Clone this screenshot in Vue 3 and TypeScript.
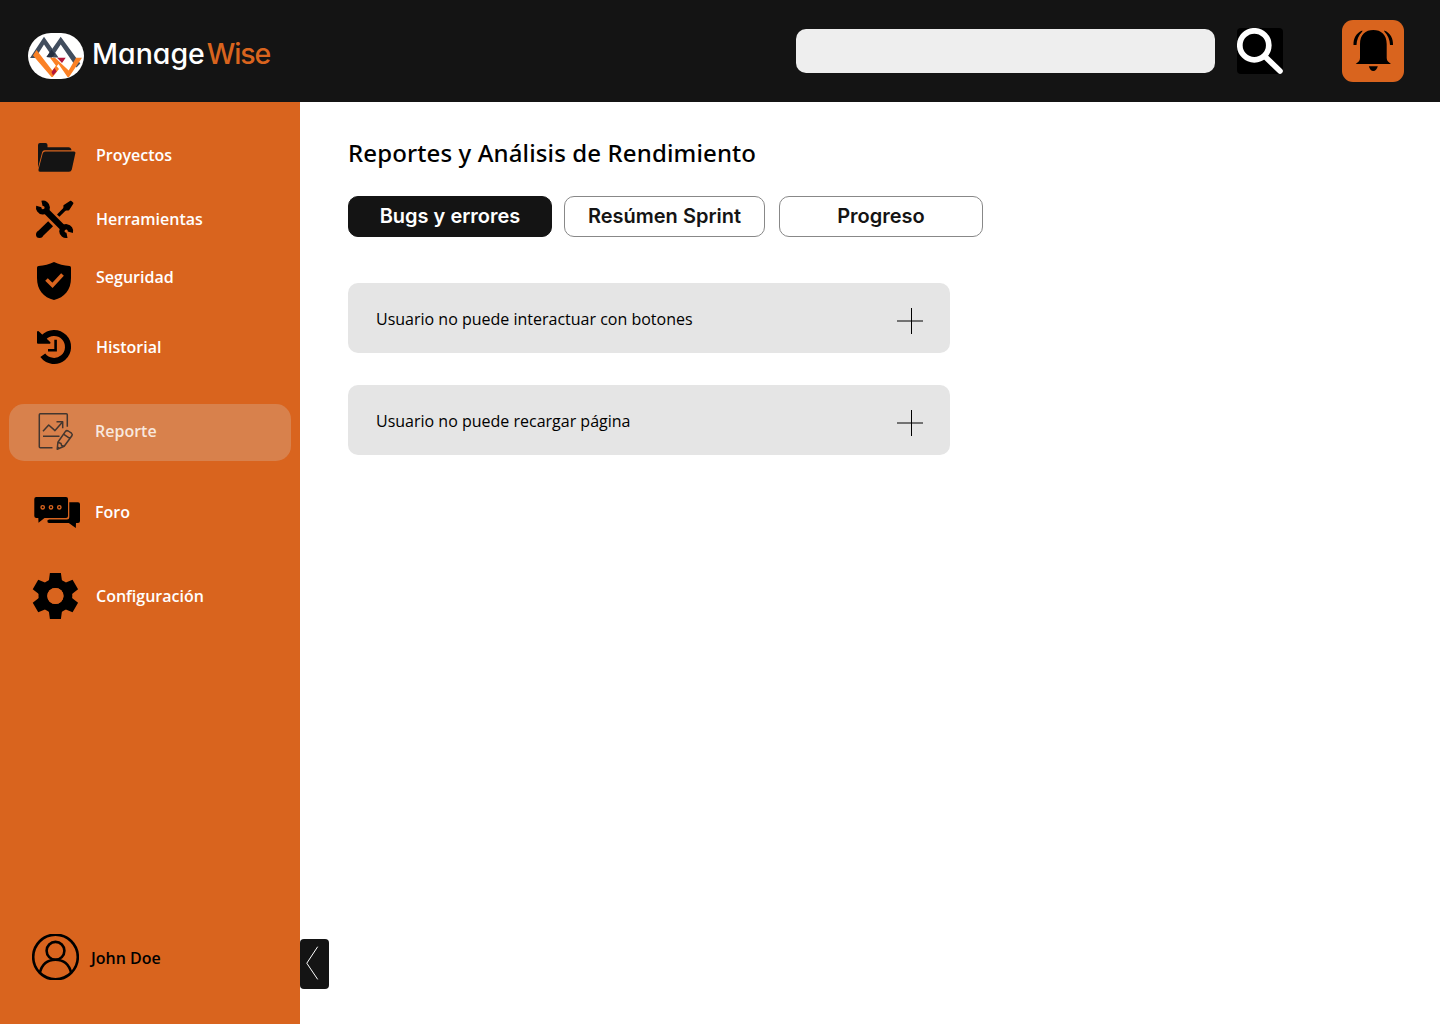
<script setup lang="ts">
import { ref } from 'vue'

interface NavItem {
  id: string
  label: string
  viewBox: string
}

const navItems: NavItem[] = [
  { id: 'proyectos', label: 'Proyectos', viewBox: '32 131 48 48' },
  { id: 'herramientas', label: 'Herramientas', viewBox: '32 195 48 48' },
  { id: 'seguridad', label: 'Seguridad', viewBox: '32 253 48 48' },
  { id: 'historial', label: 'Historial', viewBox: '32 323 48 48' },
  { id: 'reporte', label: 'Reporte', viewBox: '32 407 48 48' },
  { id: 'foro', label: 'Foro', viewBox: '32 488 48 48' },
  { id: 'configuracion', label: 'Configuración', viewBox: '32 572 48 48' },
]

const tabs = ['Bugs y errores', 'Resúmen Sprint', 'Progreso']
const activeTab = ref(0)
const query = ref('')
const issues = ['Usuario no puede interactuar con botones', 'Usuario no puede recargar página']
</script>

<template>
  <div class="app">
    <header class="topbar">
      <div class="brand">
        <svg class="logo" viewBox="28 33 56 46" width="56" height="46">
          <rect x="28" y="33" width="56" height="46" rx="23" fill="#fff" />
          <path d="M30 58 L44 36.700 L58.500 57.500 H53 L44 44.500 L35.500 58 Z" fill="#414d5e" />
          <path d="M46.500 57 L60.700 36.700 L80.300 63.500 L76.500 67.500 L60.700 44.500 L52 57.500 Z" fill="#414d5e" />
          <path d="M46.500 57 L51.500 49.500 L55 54 L52 57.500 Z" fill="#252f40" />
          <path d="M33 55.500 L36.500 50 L52.300 70.500 L56 65.500 L59 69 L52.700 77 H51.500 Z" fill="#fb8125" />
          <path d="M50 57.700 H55 L68.700 70.500 L76 57.700 H82 L69 77 H67.500 L58.500 64 L56.500 66.500 Z" fill="#fb8125" />
          <path d="M57 57.700 H65.700 L62 63 Z M54.500 68 L56.700 71.500 L53 75.500 L51.500 72 Z" fill="#b5173a" />
        </svg>
        <div class="wordmark"><span class="manage">Manage</span><span class="accent">Wise</span></div>
      </div>
      <div class="actions">
        <input v-model="query" class="search" type="text" aria-label="Buscar" />
        <button class="search-btn" aria-label="Buscar">
          <svg viewBox="1237 28 46 46" width="46" height="46">
            <path d="M1266 57.500 L1280 71" stroke="#fff" stroke-width="5.6" stroke-linecap="round" />
            <circle cx="1254.300" cy="45.300" r="14.500" fill="none" stroke="#fff" stroke-width="5.700" />
          </svg>
        </button>
        <button class="bell" aria-label="Notificaciones">
          <svg viewBox="1342 20 62 62" width="62" height="62">
            <path d="M1360 44 C1360 34.500 1365.500 30 1373.300 30 C1381 30 1386.700 34.500 1386.700 44 V58 Q1386.700 60 1388 61.500 L1391 64 H1355.700 L1358.700 61.500 Q1360 60 1360 58 Z" />
            <path d="M1368.900 66.200 H1377.800 Q1376.500 71 1373.300 71 Q1370 71 1368.900 66.200 Z" />
            <path d="M1362.300 30.500 C1356 33 1353.300 38.500 1353.500 45 H1356.500 C1356.700 39.500 1358.500 35.500 1362.300 31.500 Z M1384.300 30.500 C1390.600 33 1393.200 38.500 1393 45 H1390 C1389.800 39.500 1388 35.500 1384.300 31.500 Z" />
          </svg>
        </button>
      </div>
    </header>

    <div class="body">
      <aside class="sidebar">
        <nav>
          <a v-for="item in navItems" :key="item.id" :class="['nav-item', item.id]">
            <svg class="nav-icon" :viewBox="item.viewBox" width="48" height="48">
              <g v-if="item.id === 'proyectos'" fill="#141414">
                <path d="M38 168 V145 Q38 143 40 143 H45.500 Q47.500 143 47.500 145 V147.300 H68.500 Q71 147.300 71.500 150.300 H44.500 Q42.800 150.300 42.200 152 Z" />
                <path d="M45.500 151.400 H74 Q75.800 151.400 75.400 153 L71.800 169.500 Q71.200 171.800 69 171.800 H40 Q38 171.800 38.500 169.500 L42.700 153.500 Q43.200 151.400 45.500 151.400 Z" />
              </g>
              <g v-else-if="item.id === 'herramientas'" fill="none" stroke="#000">
                <path d="M45 210 L64 229" stroke-width="6.200" />
                <path d="M38.800 206.500 A4.300 4.300 0 1 0 42 203.400" stroke-width="5.400" />
                <path d="M70.300 232.300 A4.300 4.300 0 1 0 67 235.300" stroke-width="5.400" />
                <path d="M39.500 234.500 L50.600 223.800" stroke-width="7" />
                <circle cx="39.500" cy="234.500" r="3.500" fill="#000" stroke="none" />
                <path d="M58.200 215.600 L66 207.800" stroke-width="3.400" />
                <path d="M64.400 209.600 L64.300 205.800 L70.800 201.600 L72.500 203.200 L68.500 209.600 Z" fill="#000" stroke-width="1.800" stroke-linejoin="round" />
              </g>
              <g v-else-if="item.id === 'seguridad'">
                <path d="M54 262 Q61 265.600 69.500 266 Q71 266.200 71 267.700 V278 C71 290 64.500 297.500 54 300 C43.500 297.500 37 290 37 278 V267.700 Q37 266.200 38.500 266 Q47 265.600 54 262 Z" />
                <path d="M46.500 279.500 L52.500 285.300 L62.500 274.500" fill="none" stroke="#d9641e" stroke-width="3.700" />
              </g>
              <g v-else-if="item.id === 'historial'">
                <path d="M43.600 337.600 A14 14 0 1 1 42.800 355.300" fill="none" stroke="#000" stroke-width="6.100" />
                <path d="M38 332 L49.500 342.700 H38 Z" stroke="#000" stroke-width="2" stroke-linejoin="round" />
                <path d="M55.600 339.800 V350.200 H48" fill="none" stroke="#000" stroke-width="2.600" />
              </g>
              <g v-else-if="item.id === 'reporte'" fill="none" stroke="#43362f" stroke-width="1.500" stroke-linejoin="round">
                <path d="M67.300 426.700 V414.700 Q67.300 413.800 66.300 413.800 H40.300 Q39.300 413.800 39.300 414.800 V446.700 Q39.300 447.700 40.300 447.700 H52.500" />
                <path d="M43 431.300 L48.700 425 L55 430.600 L62.500 422" />
                <path d="M56.500 421.800 H62.700 V428.300 M43 436.200 H59.500" />
                <path d="M57.200 449.300 L57.900 442.300 L65.300 431.600 Q66.500 430 68.200 431 L71.500 433.200 Q72.800 434.300 71.900 435.800 L64.200 446.300 Z M63.500 434.200 L70.100 438.600 M57.900 442.300 L61 443.500 L61.600 445.500 L64.200 446.300 M57.600 447 L59.500 448.400" />
              </g>
              <g v-else-if="item.id === 'foro'">
                <path d="M36.300 497 H66 Q68 497 68 499 V516 Q68 518 66 518 H44.500 L38.500 522.800 L38.300 518 H36.300 Q34.300 518 34.300 516 V499 Q34.300 497 36.300 497 Z" />
                <path d="M69.300 502.200 H78 Q80 502.200 80 504.200 V521 Q80 523 78 523 H76 L75.800 528 L68.800 523 H49 Q47.300 523 47.300 520.500 L49 519.600 H67 Q69.300 519.600 69.300 517.300 Z" />
                <circle v-for="x in [42.7, 51, 59.3]" :key="x" :cx="x" cy="507.300" r="1.700" fill="none" stroke="#d9641e" stroke-width="1.400" />
              </g>
              <g v-else transform="translate(55.400 596)">
                <path v-for="n in 6" :key="n" :transform="`rotate(${n * 60})`" d="M-5.500 -23 H5.500 L6.500 -15.800 L9 -10 H-9 L-6.500 -15.800 Z" />
                <circle r="12.500" fill="none" stroke="#000" stroke-width="8.800" />
                <circle r="8.100" fill="#d9641e" />
              </g>
            </svg>
            <span>{{ item.label }}</span>
          </a>
        </nav>
        <div class="user">
          <svg viewBox="32 934 47 46" width="47" height="46" fill="none" stroke="#000" stroke-width="2.600">
            <circle cx="55.500" cy="957" r="22.300" />
            <circle cx="55.500" cy="950.800" r="8.900" />
            <path d="M39.700 973 C42 964 48 959.700 55.500 959.700 C63 959.700 69 964 71.300 973" />
          </svg>
          <span>John Doe</span>
        </div>
        <button class="collapse" aria-label="Contraer menú">
          <svg viewBox="300 939 29 50" width="29" height="50">
            <path d="M317.700 946.700 L306.800 963.200 L317.700 979.400" fill="none" stroke="#fff" />
          </svg>
        </button>
      </aside>

      <main class="content">
        <h1>Reportes y Análisis de Rendimiento</h1>
        <div class="tabs">
          <button v-for="(tab, i) in tabs" :key="tab" :class="['tab', { active: activeTab === i }]" @click="activeTab = i">
            {{ tab }}
          </button>
        </div>
        <section class="issues">
          <article v-for="issue in issues" :key="issue" class="issue">
            <span>{{ issue }}</span>
            <svg width="26" height="26" viewBox="0 0 26 26">
              <path d="M0 13 H26" stroke="#000" />
              <path d="M14.500 0 V26" stroke="#000" />
            </svg>
          </article>
        </section>
      </main>
    </div>
  </div>
</template>

<style>
body {
  margin: 0;
  background: #fff;
}
</style>

<style scoped>
* {
  box-sizing: border-box;
}
svg {
  display: block;
  flex: none;
}
button {
  margin: 0;
  padding: 0;
  border: 0;
}
.app {
  height: 1024px;
  display: flex;
  flex-direction: column;
  overflow: hidden;
  font-family: "Open Sans", "Noto Sans", sans-serif;
  font-size: 16px;
}
.topbar {
  height: 102px;
  flex: none;
  display: flex;
  justify-content: space-between;
  align-items: flex-start;
  padding: 20px 36px 0 28px;
  background: #141414;
}
.brand {
  display: flex;
  align-items: center;
  gap: 8px;
  padding-top: 13px;
}
.wordmark {
  display: flex;
  gap: 2px;
  margin-top: -5px;
  font-family: Inter, sans-serif;
  font-feature-settings: "cv11";
  font-size: 28.5px;
  line-height: 40px;
  font-weight: 500;
  color: #fff;
}
.accent {
  color: #d9641e;
  letter-spacing: -1.1px;
}
.actions {
  display: flex;
  align-items: flex-start;
}
.search {
  width: 419px;
  height: 44px;
  margin: 9px 22px 0 0;
  padding: 0 14px;
  border: 0;
  border-radius: 10px;
  outline: 0;
  background: #eee;
  font: inherit;
}
.search-btn {
  margin: 8px 59px 0 0;
  border-radius: 4px;
  background: #000;
}
.bell {
  border-radius: 11px;
  background: #d9641e;
}
.body {
  flex: 1;
  display: flex;
}
.sidebar {
  position: relative;
  width: 300px;
  flex: none;
  display: flex;
  flex-direction: column;
  justify-content: space-between;
  padding: 29px 9px 44px;
  background: #d9641e;
}
.nav-item {
  display: flex;
  align-items: center;
  gap: 16px;
  height: 48px;
  padding-left: 23px;
  color: #fff;
  font-weight: 600;
  line-height: 22px;
}
.herramientas {
  margin-top: 16px;
}
.seguridad {
  margin-top: 10px;
}
.historial {
  margin-top: 22px;
}
.reporte {
  height: 57px;
  margin-top: 33px;
  padding-bottom: 3px;
  gap: 15px;
  border-radius: 15px;
  background: rgba(217, 217, 217, 0.25);
  color: #f8e8de;
}
.foro {
  margin-top: 27px;
  gap: 15px;
}
.configuracion {
  margin-top: 36px;
}
.user {
  display: flex;
  align-items: center;
  gap: 12px;
  padding-left: 23px;
  color: #000;
  font-weight: 600;
}
.user span {
  padding-top: 2px;
}
.collapse {
  position: absolute;
  left: 300px;
  top: 837px;
  border-radius: 4px;
  background: #141414;
}
.content {
  flex: 1;
  padding: 34px 48px 0;
}
h1 {
  margin: 0;
  font-family: "Noto Sans", "Open Sans", sans-serif;
  font-size: 24px;
  line-height: 34px;
  font-weight: 500;
  letter-spacing: 0.12px;
  color: #000;
}
.tabs {
  display: flex;
  margin-top: 26px;
}
.tab {
  width: 204px;
  height: 41px;
  padding-bottom: 1px;
  border: 1px solid #888;
  border-radius: 10px;
  background: #fff;
  color: #141414;
  font: 600 20px/24px Inter, sans-serif;
}
.tab:nth-child(2) {
  width: 201px;
  margin: 0 14px 0 12px;
}
.tab.active {
  border-color: #141414;
  background: #141414;
  color: #fff;
}
.issues {
  display: flex;
  flex-direction: column;
  gap: 32px;
  width: 602px;
  margin-top: 46px;
}
.issue {
  display: flex;
  justify-content: space-between;
  align-items: center;
  height: 70px;
  padding: 0 27px 0 28px;
  border-radius: 10px;
  background: #e5e5e5;
  color: #000;
}
.issue span {
  padding-top: 1px;
}
.issue svg {
  margin-top: 6px;
}
</style>
